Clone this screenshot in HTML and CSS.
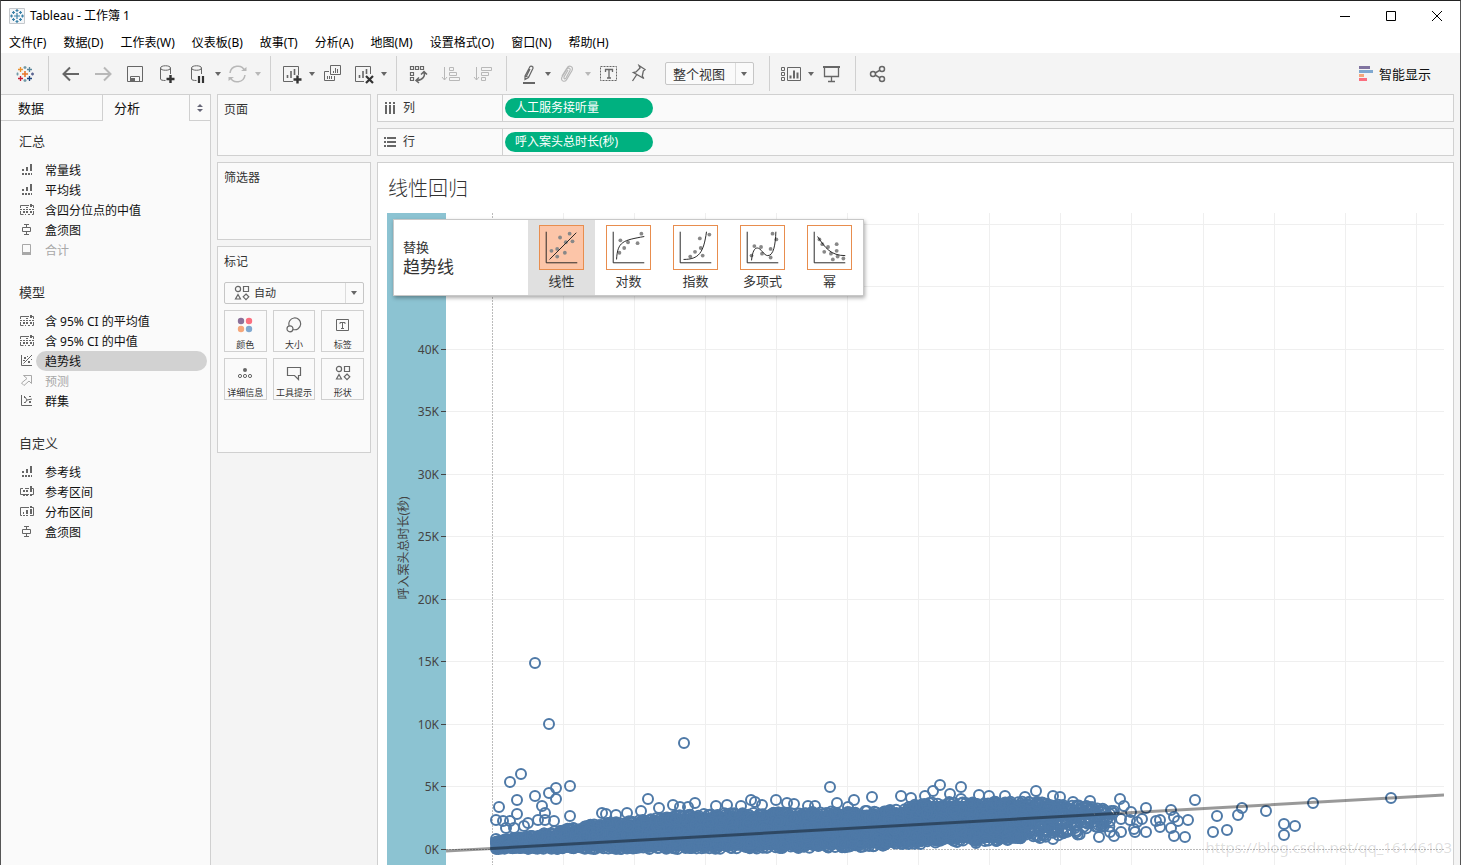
FILE: index.html
```html
<!DOCTYPE html>
<html lang="zh-CN">
<head>
  <meta charset="UTF-8">
  <meta name="viewport" content="width=device-width, initial-scale=1.0">
  <title>Tableau - 工作簿 1</title>
  <link rel="stylesheet" href="styles.css">
</head>
<body>
  <svg class="sprite" aria-hidden="true">
    <symbol id="i-caret" viewBox="0 0 6 4"><path d="M0 0h6L3 4z" fill="currentColor"/></symbol>
    <symbol id="i-line" viewBox="0 0 14 14"><path d="M2 6h2v2H2zM6 4h2v4H6zM10 1h2v7h-2zM2 10h2v2H2zM5 10h2v2H5zM8 10h2v2H8zM11 10h1v2h-1z" fill="currentColor"/></symbol>
    <symbol id="i-band" viewBox="0 0 14 14"><path d="M9 2.500H.5V5M13.500 5V2.500H12M.5 8v3.500h3M5 11.500h1M8 11.500h2M12 11.500h1.500V8" fill="none" stroke="currentColor"/><path d="M0 6.500h14" stroke="currentColor" stroke-dasharray="2 1"/><path d="M3 8h2v2H3zM6 8h2v2H6zM10 8h2v2h-2zM6 4h2v1H6zM10 1h2v3h-2z" fill="currentColor"/></symbol>
    <symbol id="i-range" viewBox="0 0 14 14"><path d="M3 3.500H.5v6H3M11 3.500h2.500v6H11M5 3.500h4M5 9.500h4" fill="none" stroke="currentColor"/><path d="M3 5h2v2H3zM6 5h2v2H6zM10 1h2v6h-2zM3 9h2v2H3zM6 9h2v2H6zM10 9h2v2h-2z" fill="currentColor"/></symbol>
    <symbol id="i-dist" viewBox="0 0 14 14"><path d="M9 2.500H.5v8H2M12 10.500h1.500v-8H12" fill="none" stroke="currentColor"/><path d="M3 7h1v2H3zM6 5h2v4H6zM10 4h2v5h-2zM10 1h2v2h-2zM3 10h2v1H3zM6 10h2v1H6zM10 10h2v1h-2z" fill="currentColor"/></symbol>
    <symbol id="i-box" viewBox="0 0 14 14"><path d="M4 1.500h5M6.500 2v2M2.500 4.500h8v4h-8zM6.500 9v2M4 11.500h5" fill="none" stroke="currentColor"/></symbol>
    <symbol id="i-total" viewBox="0 0 14 14"><path d="M2.500 1.500h8v10h-8z" fill="none" stroke="currentColor"/><path d="M2 9h9v3H2z" fill="currentColor"/></symbol>
    <symbol id="i-trend" viewBox="0 0 14 14"><path d="M1.500 1v10.500H12M3.500 9.500L12 1" fill="none" stroke="currentColor"/><path d="M4 3h2v2H4zM7 2h1v1H7zM3 6h2v1H3zM8 7h2v2H8zM11 5h1v1h-1z" fill="currentColor"/></symbol>
    <symbol id="i-cluster" viewBox="0 0 14 14"><path d="M1.500 1v10.500H12M5 3l2 3-2 3M7 6l5-1" fill="none" stroke="currentColor"/><path d="M4 2h1v2H4zM9 2h2v1H9zM9 7h2v2H9zM4 8h1v1H4z" fill="currentColor"/></symbol>
    <symbol id="i-forecast" viewBox="0 0 14 14"><path d="M3.500 1.500h8v8L9 7l-5 4.500L1.500 9 7 4.500z" fill="none" stroke="currentColor"/></symbol>
    <symbol id="i-shapes" viewBox="0 0 16 16"><g fill="none" stroke="currentColor" stroke-width="1.200"><circle cx="4" cy="4" r="2.600"/><path d="M9.500 1.500h5v5h-5zM4 9.500L6.500 14h-5zM12 9l2.800 2.800L12 14.600l-2.800-2.800z"/></g></symbol>
  </svg>

  <div class="window">
    <header class="titlebar">
      <svg class="app-icon" viewBox="0 0 16 16"><path d="M.5.500h15v15H.5z" fill="#f4f6f8" stroke="#c4c8cc"/><g stroke="#3b82a8" stroke-width="1.200"><path d="M8 5v6M5 8h6M8 1v3M6.500 2.500h3M8 12v3M6.500 13.500h3M1 8h3M2.500 6.500v3M12 8h3M13.500 6.500v3M4.500 3v3M3 4.500h3M11.500 3v3M10 4.500h3M4.500 10v3M3 11.500h3M11.500 10v3M10 11.500h3"/></g></svg>
      <h1>Tableau - 工作簿 1</h1>
      <div class="window-controls">
        <button aria-label="最小化"><svg viewBox="0 0 10 10"><path d="M0 5.500h10"/></svg></button>
        <button aria-label="最大化"><svg viewBox="0 0 10 10"><path d="M.5.500h9v9h-9z"/></svg></button>
        <button aria-label="关闭"><svg viewBox="0 0 10 10"><path d="M0 0l10 10M10 0L0 10"/></svg></button>
      </div>
    </header>

    <nav class="menubar">
      <a href="#">文件(F)</a>
      <a href="#">数据(D)</a>
      <a href="#">工作表(W)</a>
      <a href="#">仪表板(B)</a>
      <a href="#">故事(T)</a>
      <a href="#">分析(A)</a>
      <a href="#">地图(M)</a>
      <a href="#">设置格式(O)</a>
      <a href="#">窗口(N)</a>
      <a href="#">帮助(H)</a>
    </nav>

    <div class="toolbar">
      <div class="tool-group">
        <button class="tool" aria-label="开始页面"><svg viewBox="0 0 20 20" stroke-width="1.300"><path d="M10 7v6M7 10h6" stroke="#e8762b" stroke-width="1.600"/><path d="M5.500 3v5M3 5.500h5" stroke="#eb912c"/><path d="M14.500 3v5M12 5.500h5" stroke="#59879b"/><path d="M5.500 12v5M3 14.500h5" stroke="#c72035"/><path d="M14.500 12v5M12 14.500h5" stroke="#1f457e"/><path d="M10 2v3M8.500 3.500h3M10 15v3M8.500 16.500h3" stroke="#7099a6"/><path d="M3.500 10h-2M2.500 8.500v3" stroke="#7099a6"/><path d="M16 10h3M17.500 8.500v3" stroke="#5b6591"/></svg></button>
      </div>
      <div class="tool-group">
        <button class="tool" aria-label="撤消"><svg viewBox="0 0 20 20" stroke-width="2"><path d="M3 10h15M9 3.500L2.500 10 9 16.500"/></svg></button>
        <button class="tool off" aria-label="重做"><svg viewBox="0 0 20 20" stroke-width="2"><path d="M2 10h15M11 3.500l6.500 6.500-6.500 6.500"/></svg></button>
        <button class="tool" aria-label="保存"><svg viewBox="0 0 20 20"><path d="M2.500 2.500h15v15h-15zM5.500 17v-4.500h9V17"/><path d="M6 14h4v3H6z" fill="currentColor" stroke="none"/></svg></button>
        <button class="tool" aria-label="新建数据源"><svg viewBox="0 0 20 20"><path d="M3.500 4v11c0 1 2 1.500 5 1.500M13.500 4v6M3.500 4C3.500 1 13.500 1 13.500 4S3.500 7 3.500 4"/><path class="dark" d="M13.500 11v8M9.500 15h8" stroke-width="2.400"/></svg></button>
        <button class="tool narrow" aria-label="暂停自动更新"><svg viewBox="0 0 20 20"><path d="M3.500 4v11c0 1 2 1.500 5 1.500M13.500 4v6M3.500 4C3.500 1 13.500 1 13.500 4S3.500 7 3.500 4"/><path class="dark" d="M11 12v7M15 12v7" stroke-width="2.200"/></svg></button>
        <button class="caret" aria-label="更新选项"><svg><use href="#i-caret"/></svg></button>
        <button class="tool narrow off" aria-label="运行更新"><svg viewBox="0 0 20 20" stroke-width="1.500"><path d="M2 9c1-8 12-9 14.500-2.500M17 11c-1 8-12 9-14.500 2.500"/><path d="M13 7h5.500V3zM6 13H.5v4z" fill="currentColor" stroke="none"/></svg></button>
        <button class="caret off" aria-label="运行选项"><svg><use href="#i-caret"/></svg></button>
      </div>
      <div class="tool-group">
        <button class="tool narrow" aria-label="新建工作表"><svg viewBox="0 0 20 20"><path d="M11 17.500H1.500v-15h15V11"/><path d="M5.500 14v-3M9 14V7M12.500 11V5" stroke-width="1.600"/><path class="dark" d="M15.500 11.500v8M11.500 15.500h8" stroke-width="2.400"/></svg></button>
        <button class="caret" aria-label="新建选项"><svg><use href="#i-caret"/></svg></button>
        <button class="tool" aria-label="复制工作表"><svg viewBox="0 0 20 20"><path d="M7.500 1.500h10v9h-10zM6 7.500H1.500v9h10V12"/><path d="M10.500 9V7M12.500 9V4M14.500 9V5M4.500 15v-3M6.500 15v-3M8.500 15v-3"/></svg></button>
        <button class="tool narrow" aria-label="清除工作表"><svg viewBox="0 0 20 20"><path d="M10 17.500H1.500v-15h15V10"/><path d="M5.500 14v-3M9 14V7M12.500 10V5" stroke-width="1.600"/><path class="dark" d="M12 12l7 7M19 12l-7 7" stroke-width="2.200"/></svg></button>
        <button class="caret" aria-label="清除选项"><svg><use href="#i-caret"/></svg></button>
      </div>
      <div class="tool-group">
        <button class="tool" aria-label="交换行和列"><svg viewBox="0 0 20 20" stroke-width="1.200"><path d="M1.500 2.500h3v3h-3zM6.500 2.500h3v3h-3zM11.500 2.500h3v3h-3zM1.500 8.500h3v3h-3zM1.500 13.500h3v3h-3z"/><path d="M15 8c1.500 4-1 8-7 8.500M12 10.500l3-3 3 3M10 13.500l-3 3 3 2.500" stroke-width="1.500"/></svg></button>
        <button class="tool off" aria-label="升序"><svg viewBox="0 0 20 20"><path d="M3.500 3v13M1 13l2.500 3L6 13M8.500 3.500h4v3h-4zM8.500 8.500h7v3h-7zM8.500 13.500h10v3h-10z"/></svg></button>
        <button class="tool off" aria-label="降序"><svg viewBox="0 0 20 20"><path d="M3.500 3v13M1 13l2.500 3L6 13M8.500 3.500h10v3h-10zM8.500 8.500h7v3h-7zM8.500 13.500h4v3h-4z"/></svg></button>
      </div>
      <div class="tool-group">
        <button class="tool narrow" aria-label="突出显示"><svg viewBox="0 0 20 20"><path d="M7 12l5-9.500c1-1 3.500 0 3 1.700L10.500 13.500 7 15.500zM7 12l3.500 1.500M12 5l-3.500 7" stroke-width="1.200"/><path d="M5 19h12" stroke-width="2"/></svg></button>
        <button class="caret" aria-label="突出选项"><svg><use href="#i-caret"/></svg></button>
        <button class="tool narrow off" aria-label="分组成员"><svg viewBox="0 0 20 20"><path d="M4 12l5-8c2-3.500 7-1.500 5 2.500L9 15c-2 4-7 2-5-2l5-8c1.500-2 4-.5 3 1.500L8 14c-1 1.500-2.500.5-2-1l4-7" stroke-width="1.200"/></svg></button>
        <button class="caret off" aria-label="分组选项"><svg><use href="#i-caret"/></svg></button>
        <button class="tool" aria-label="显示标记标签"><svg viewBox="0 0 20 20"><path d="M1.500 2.500h16v14h-16z" stroke-dasharray="2 1"/><path d="M6.500 8V5.500h7V8M10 6v8M8 14h4" stroke-width="1.300"/></svg></button>
        <button class="tool narrow" aria-label="固定轴"><svg viewBox="0 0 20 20"><path d="M9 1.500l6 4-1.700 1.500-1 5 1.500 2.500L3.500 8.500l2.500-.5 4-4zM6.500 11l-4 6" stroke-width="1.300"/></svg></button>
        <label class="select fit">
          <select aria-label="适合"><option>整个视图</option><option>标准</option></select>
          <svg><use href="#i-caret"/></svg>
        </label>
      </div>
      <div class="tool-group">
        <button class="tool narrow wide-icon" aria-label="显示/隐藏功能区"><svg viewBox="0 0 22 20"><path d="M1.500 3.500h3v3h-3zM1.500 8.500h3v3h-3zM1.500 13.500h3v3h-3zM7.500 3.500h13v13h-13z"/><path d="M10.500 14.500v-3M14 14.500v-8M17.500 14.500v-6" stroke-width="2"/></svg></button>
        <button class="caret" aria-label="功能区选项"><svg><use href="#i-caret"/></svg></button>
        <button class="tool" aria-label="演示模式"><svg viewBox="0 0 20 20"><path d="M1 3h17" stroke-width="2"/><path d="M2.500 4v8.500h14V4M9.500 13v4M6 17.500h7" stroke-width="1.300"/></svg></button>
      </div>
      <div class="tool-group last">
        <button class="tool" aria-label="共享"><svg viewBox="0 0 20 20" stroke-width="1.500"><circle cx="5" cy="10" r="2.500"/><circle cx="14" cy="5" r="2.500"/><circle cx="14" cy="15" r="2.500"/><path d="M7.200 9L12 6.200M7.200 11L12 13.800"/></svg></button>
      </div>
      <button class="show-me">
        <svg viewBox="0 0 15 15"><path fill="#8074a0" d="M0 0h11v3H0z"/><path fill="#7fa8d0" d="M0 4h14v3H0z"/><path fill="#f5a77b" d="M0 8h5v3H0z"/><path fill="#fb6f7f" d="M0 12h8v3H0z"/></svg>
        智能显示
      </button>
    </div>

    <main class="workspace">
      <aside class="sidebar">
        <div class="tabs">
          <button class="tab">数据</button>
          <button class="tab active">分析</button>
          <button class="tab-toggle" aria-label="折叠"><svg viewBox="0 0 6 8"><path d="M0 3h6L3 0zM0 5h6L3 8z" fill="#667"/></svg></button>
        </div>
        <div class="analytics">
          <section>
            <h2>汇总</h2>
            <button class="item"><svg><use href="#i-line"/></svg><span>常量线</span></button>
            <button class="item"><svg><use href="#i-line"/></svg><span>平均线</span></button>
            <button class="item"><svg><use href="#i-band"/></svg><span>含四分位点的中值</span></button>
            <button class="item"><svg><use href="#i-box"/></svg><span>盒须图</span></button>
            <button class="item off" disabled><svg><use href="#i-total"/></svg><span>合计</span></button>
          </section>
          <section>
            <h2>模型</h2>
            <button class="item"><svg><use href="#i-band"/></svg><span>含 95% CI 的平均值</span></button>
            <button class="item"><svg><use href="#i-band"/></svg><span>含 95% CI 的中值</span></button>
            <button class="item selected"><svg><use href="#i-trend"/></svg><span>趋势线</span></button>
            <button class="item off" disabled><svg><use href="#i-forecast"/></svg><span>预测</span></button>
            <button class="item"><svg><use href="#i-cluster"/></svg><span>群集</span></button>
          </section>
          <section>
            <h2>自定义</h2>
            <button class="item"><svg><use href="#i-line"/></svg><span>参考线</span></button>
            <button class="item"><svg><use href="#i-range"/></svg><span>参考区间</span></button>
            <button class="item"><svg><use href="#i-dist"/></svg><span>分布区间</span></button>
            <button class="item"><svg><use href="#i-box"/></svg><span>盒须图</span></button>
          </section>
        </div>
      </aside>

      <div class="cards">
        <section class="card pages"><h2>页面</h2></section>
        <section class="card filters"><h2>筛选器</h2></section>
        <section class="card marks">
          <h2>标记</h2>
          <label class="select mark-type">
            <svg class="mark-icon"><use href="#i-shapes"/></svg>
            <select aria-label="标记类型"><option>自动</option><option>圆</option></select>
            <svg><use href="#i-caret"/></svg>
          </label>
          <div class="mark-grid">
            <button><svg viewBox="0 0 16 16"><circle cx="4" cy="4" r="3.200" fill="#8b7099"/><circle cx="12" cy="4" r="3.200" fill="#fb6f7f"/><circle cx="4" cy="12" r="3.200" fill="#f5a77b"/><circle cx="12" cy="12" r="3.200" fill="#7fa8d0"/></svg>颜色</button>
            <button><svg viewBox="0 0 16 16" fill="none" stroke="currentColor" stroke-width="1.200"><path d="M3.200 8.800a5.900 5.900 0 1 1 3.900 3.700"/><circle cx="4" cy="11.800" r="3"/></svg>大小</button>
            <button><svg viewBox="0 0 16 16" fill="none" stroke="currentColor"><path d="M1.500 2.500h12v11h-12z"/><path d="M5 7V5.500h5V7M7.500 6v5M6 11.500h3"/></svg>标签</button>
            <button><svg viewBox="0 0 16 16" fill="none" stroke="currentColor"><circle cx="8" cy="5" r="2" fill="currentColor" stroke="none"/><circle cx="3" cy="11" r="1.600"/><circle cx="8" cy="11" r="1.600"/><circle cx="13" cy="11" r="1.600"/></svg>详细信息</button>
            <button><svg viewBox="0 0 16 16" fill="none" stroke="currentColor" stroke-width="1.200"><path d="M1.500 2.500h13v8h-2v4l-4-4h-7z"/></svg>工具提示</button>
            <button><svg><use href="#i-shapes"/></svg>形状</button>
          </div>
        </section>
      </div>

      <div class="sheet">
        <div class="shelf">
          <div class="shelf-name"><svg viewBox="0 0 12 14"><path d="M1 1h2v2H1zM5 1h2v2H5zM9 1h2v2H9zM1 4h2v9H1zM5 4h2v9H5zM9 4h2v9H9z" fill="#666"/></svg>列</div>
          <button class="pill">人工服务接听量</button>
        </div>
        <div class="shelf">
          <div class="shelf-name"><svg viewBox="0 0 12 14"><path d="M0 2h2v2H0zM0 6h2v2H0zM0 10h2v2H0zM3 2h9v2H3zM3 6h9v2H3zM3 10h9v2H3z" fill="#666"/></svg>行</div>
          <button class="pill">呼入案头总时长(秒)</button>
        </div>
        <section class="view">
          <h2>线性回归</h2>
          <div class="chart">
            <svg id="plot" role="img" aria-label="线性回归散点图"></svg>
            <div class="drop-panel">
              <div class="drop-title"><small>替换</small><strong>趋势线</strong></div>
              <button class="model active"><svg viewBox="0 0 45 45"><g class="dots"><circle cx="21" cy="12" r="2"/><circle cx="31" cy="8" r="2"/><circle cx="34" cy="16" r="2"/><circle cx="27" cy="17" r="2"/><circle cx="12" cy="26" r="2"/><circle cx="18" cy="24" r="2"/><circle cx="26" cy="28" r="2"/><circle cx="18" cy="32" r="2"/></g><path d="M6.500 6v32.500H39M10 35L38 7"/></svg>线性</button>
              <button class="model"><svg viewBox="0 0 45 45"><g class="dots"><circle cx="14" cy="15" r="2"/><circle cx="36" cy="8" r="2"/><circle cx="22" cy="17" r="2"/><circle cx="32" cy="18" r="2"/><circle cx="18" cy="23" r="2"/><circle cx="13" cy="28" r="2"/></g><path d="M6.500 6v32.500H39M10 35C11 16 17 15 39 11"/></svg>对数</button>
              <button class="model"><svg viewBox="0 0 45 45"><g class="dots"><circle cx="37" cy="9" r="2"/><circle cx="27" cy="13" r="2"/><circle cx="28" cy="23" r="2"/><circle cx="22" cy="27" r="2"/><circle cx="17" cy="32" r="2"/><circle cx="30" cy="31" r="2"/></g><path d="M6.500 6v32.500H39M10 35C26 35 31 28 34 6"/></svg>指数</button>
              <button class="model"><svg viewBox="0 0 45 45"><g class="dots"><circle cx="33" cy="8" r="2"/><circle cx="37" cy="14" r="2"/><circle cx="14" cy="21" r="2"/><circle cx="21" cy="22" r="2"/><circle cx="31" cy="24" r="2"/><circle cx="22" cy="29" r="2"/><circle cx="11" cy="31" r="2"/><circle cx="31" cy="33" r="2"/></g><path d="M6.500 6v32.500H39M11 36C12 27 14 23 17 23C21 23 24 31 28 31C34 31 36 20 36.500 6"/></svg>多项式</button>
              <button class="model"><svg viewBox="0 0 45 45"><g class="dots"><circle cx="12" cy="14" r="2"/><circle cx="15" cy="19" r="2"/><circle cx="21" cy="22" r="2"/><circle cx="17" cy="27" r="2"/><circle cx="24" cy="29" r="2"/><circle cx="30" cy="19" r="2"/><circle cx="30" cy="26" r="2"/><circle cx="31" cy="32" r="2"/><circle cx="26" cy="35" r="2"/><circle cx="37" cy="34" r="2"/></g><path d="M6.500 6v32.500H39M10 11C18 23 24 31 39 31"/></svg>幂</button>
            </div>
            <span class="watermark">https://blog.csdn.net/qq_16146103</span>
          </div>
        </section>
      </div>
    </main>
  </div>
  <script src="chart.js"></script>
</body>
</html>
```

FILE: styles.css
```css
:root {
  --line: #d0d0d0;
  --bar: #f4f4f4;
  --card: #fafafa;
  --text: #333;
  --icon: #666;
  --green: #00b180;
  --axis: #8cc3d2;
}
* {
  box-sizing: border-box;
}
body {
  margin: 0;
  font-family: "Noto Sans", "Noto Sans CJK SC", sans-serif;
  font-size: 12px;
  line-height: 20px;
  color: var(--text);
}
h1, h2 {
  margin: 0;
  font-weight: normal;
}
button, select {
  font: inherit;
  color: inherit;
  background: none;
  border: none;
  padding: 0;
}
svg {
  display: block;
  flex: none;
}
.sprite {
  display: none;
}
.window {
  display: flex;
  flex-direction: column;
  height: 100vh;
  overflow: hidden;
  background: var(--bar);
  border: 1px solid #555;
  border-top-color: #222;
  border-bottom: none;
}

/* title and menu */
.titlebar {
  display: flex;
  align-items: center;
  height: 30px;
  padding-left: 8px;
  background: #fff;
  color: #000;
}
.app-icon {
  width: 16px;
  height: 16px;
  margin-right: 5px;
}
.titlebar h1 {
  font-size: 12px;
}
.window-controls {
  display: flex;
  margin-left: auto;
}
.window-controls button {
  display: grid;
  place-items: center;
  width: 46px;
  height: 30px;
}
.window-controls svg {
  width: 10px;
  height: 10px;
  fill: none;
  stroke: #000;
}
.menubar {
  display: flex;
  gap: 17px;
  height: 22px;
  padding: 2px 0 0 8px;
  background: #fff;
}
.menubar a {
  color: #000;
  text-decoration: none;
}

/* toolbar */
.toolbar {
  display: flex;
  align-items: center;
  height: 41px;
  padding: 0 29px 0 2px;
}
.tool-group {
  display: flex;
  align-items: center;
  height: 35px;
  padding: 0 7px 0 6px;
  border-right: 1px solid var(--line);
}
.tool-group.last {
  border-right: none;
}
.tool, .caret {
  display: grid;
  place-items: center;
  width: 32px;
  height: 28px;
  color: var(--icon);
}
.tool.narrow {
  width: 30px;
}
.tool svg {
  width: 20px;
  height: 20px;
  fill: none;
  stroke: currentColor;
}
.tool.wide-icon svg {
  width: 22px;
}
.tool .dark {
  stroke: #333;
}
.caret {
  width: 10px;
}
.caret svg, .select svg:last-child {
  width: 6px;
  height: 4px;
}
.tool.off, .caret.off {
  color: #b8b8b8;
}
.select {
  display: flex;
  align-items: center;
  position: relative;
  border: 1px solid #c6c6c6;
  border-radius: 2px;
  background: var(--card);
}
.select select {
  flex: 1;
  height: 100%;
  appearance: none;
}
.select svg:last-child {
  position: absolute;
  right: 6px;
  color: var(--icon);
}
.select::after {
  content: "";
  position: absolute;
  top: 0;
  bottom: 0;
  right: 17px;
  width: 1px;
  background: #dcdcdc;
}
.fit {
  width: 89px;
  height: 23px;
  margin: 0 8px 0 10px;
}
.fit select {
  padding-left: 7px;
  font-size: 13px;
}
.show-me {
  display: flex;
  align-items: center;
  gap: 5px;
  margin-left: auto;
  font-size: 13px;
  color: #111;
}
.show-me svg {
  width: 15px;
  height: 15px;
}

/* analytics pane */
.workspace {
  display: flex;
  flex: 1;
  min-height: 0;
}
.sidebar {
  width: 210px;
  flex: none;
  background: var(--card);
  border-right: 1px solid var(--line);
}
.tabs {
  display: flex;
  height: 27px;
  border-top: 1px solid var(--line);
}
.tab {
  width: 102px;
  padding-left: 17px;
  text-align: left;
  font-size: 13px;
  color: #111;
  border-right: 1px solid var(--line);
  border-bottom: 1px solid var(--line);
}
.tab.active {
  flex: 1;
  padding-left: 11px;
  border-bottom: none;
}
.tab-toggle {
  display: grid;
  place-items: center;
  width: 20px;
  border-bottom: 1px solid var(--line);
}
.tab-toggle svg {
  width: 6px;
  height: 8px;
}
.analytics {
  display: flex;
  flex-direction: column;
  gap: 22px;
  padding: 10px 3px 0 18px;
}
.analytics h2 {
  margin-bottom: 9px;
  font-size: 13px;
}
.item {
  display: flex;
  align-items: center;
  gap: 2px;
  width: 100%;
  height: 20px;
  text-align: left;
  color: #111;
}
.item svg {
  width: 14px;
  height: 14px;
  margin-left: 1px;
  color: var(--icon);
}
.item span {
  flex: 1;
  height: 20px;
  padding-left: 9px;
  border-radius: 10px;
  line-height: 22px;
}
.item.selected span {
  background: #d2d2d2;
}
.item.off, .item.off svg {
  color: #a8a8a8;
}

/* cards */
.cards {
  display: flex;
  flex-direction: column;
  gap: 6px;
  width: 154px;
  flex: none;
  margin: 0 6px;
}
.card {
  padding: 5px 6px;
  background: var(--card);
  border: 1px solid var(--line);
}
.card h2 {
  font-size: 12px;
}
.pages {
  height: 62px;
}
.filters {
  height: 78px;
}
.marks {
  height: 207px;
}
.mark-type {
  height: 22px;
  margin: 10px 0 6px;
}
.mark-icon {
  width: 16px;
  height: 16px;
  margin-left: 9px;
  color: var(--icon);
}
.mark-type select {
  padding-left: 4px;
  font-size: 11px;
}
.mark-grid {
  display: grid;
  grid-template-columns: repeat(3, 1fr);
  gap: 6px;
}
.mark-grid button {
  display: flex;
  flex-direction: column;
  align-items: center;
  gap: 5px;
  height: 42px;
  padding-top: 6px;
  border: 1px solid var(--line);
  font-size: 9px;
  line-height: 14px;
  white-space: nowrap;
}
.mark-grid svg {
  width: 16px;
  height: 16px;
  color: var(--icon);
}

/* shelves and view */
.sheet {
  display: flex;
  flex-direction: column;
  flex: 1;
  gap: 6px;
  min-width: 0;
  padding-right: 6px;
}
.shelf {
  display: flex;
  align-items: center;
  height: 28px;
  flex: none;
  background: var(--card);
  border: 1px solid var(--line);
}
.shelf-name {
  display: flex;
  align-items: center;
  gap: 7px;
  width: 125px;
  height: 100%;
  padding-left: 6px;
  border-right: 1px solid var(--line);
}
.shelf-name svg {
  width: 12px;
  height: 14px;
}
.pill {
  width: 148px;
  height: 20px;
  margin-left: 2px;
  padding-left: 10px;
  border-radius: 10px;
  background: var(--green);
  color: #fff;
  text-align: left;
}
.view {
  display: flex;
  flex-direction: column;
  flex: 1;
  min-height: 0;
  padding: 11px 9px 0;
  background: #fff;
  border: 1px solid var(--line);
  border-bottom: none;
}
.view h2 {
  margin-bottom: 9px;
  padding-left: 1px;
  font-size: 20px;
  font-weight: 300;
  line-height: 30px;
}
.chart {
  position: relative;
  flex: 1;
  min-height: 0;
}
#plot {
  width: 100%;
  height: 100%;
}
.axis {
  fill: var(--axis);
}
.grid {
  stroke: #efefef;
}
.zero {
  stroke: #bbb;
  stroke-dasharray: 2 1;
}
.tick {
  stroke: #444;
}
.axis-label {
  fill: #444;
  font-size: 12px;
  text-anchor: end;
}
.axis-title {
  fill: #444;
  font-size: 12px;
  text-anchor: middle;
}
.mark {
  fill: none;
  stroke: #4e79a7;
  stroke-width: 2;
}
.mass {
  fill: #4e79a7;
}
.trend {
  stroke: #000;
  stroke-opacity: 0.4;
  stroke-width: 3;
}

/* trend line drop targets */
.drop-panel {
  position: absolute;
  top: 6px;
  left: 6px;
  display: flex;
  height: 77px;
  background: #fff;
  border: 1px solid #c8c8c8;
  box-shadow: 1px 2px 4px #0005;
}
.drop-title {
  display: flex;
  flex-direction: column;
  justify-content: center;
  width: 134px;
  padding: 0 0 2px 9px;
}
.drop-title small {
  font-size: 13px;
}
.drop-title strong {
  font-size: 17px;
  font-weight: normal;
}
.model {
  display: flex;
  flex-direction: column;
  align-items: center;
  gap: 1px;
  width: 67px;
  padding-top: 5px;
  font-size: 13px;
}
.model svg {
  width: 45px;
  height: 45px;
  border: 1px solid #e88d4e;
  fill: none;
  stroke: #222;
}
.model .dots {
  fill: #888;
  stroke: none;
}
.model.active {
  background: #e0e0e0;
}
.model.active svg {
  background: #fcc5a8;
}
.watermark {
  position: absolute;
  right: -8px;
  bottom: 8px;
  font-size: 15px;
  color: #00000024;
}
```

FILE: chart.js
```js
const svg = document.getElementById('plot');
const NS = 'http://www.w3.org/2000/svg';

const AXIS_W = 59;     // width of the value axis
const BASE_W = 998;    // plot width that the point positions refer to
const ZERO_X = 46;
const ZERO_Y = 636;
const STEP_X = 71.05;
const STEP_Y = 62.5;   // 5K

// [x, height above zero] of the marks outside the dense area
const outliers = [
  [43,186],[57,125],[29,75],[18,67],[25,49],[43,53],[57,56],[64,61],[64,50],[78,63],[7,42],[50,43],[53,36],
  [4,29],[11,28],[18,28],[25,35],[14,21],[22,21],[46,29],[53,29],[36,26],[32,23],[62,28],[4,10],[192,106],
  [78,33],[156,50],[110,36],[114,35],[124,34],[135,36],[149,38],[167,41],[181,44],[188,42],[196,42],[203,46],
  [224,43],[235,44],[249,43],[259,49],[263,47],[270,44],[284,49],[295,46],[302,45],[316,43],[323,43],[338,62],
  [345,46],[362,49],[380,52],[356,42],[409,53],[419,51],[433,53],[441,58],[448,64],[469,62],[458,55],[469,50],
  [487,54],[497,53],[513,53],[533,52],[544,58],[561,53],[568,52],[581,47],[598,48],[628,50],[632,43],[639,37],
  [654,41],[679,39],[703,49],[664,28],[668,29],[668,22],[650,30],[645,27],[642,20],[654,17],[643,17],[629,17],
  [629,30],[638,29],[618,28],[607,12],[622,13],[618,17],[682,32],[686,28],[696,29],[679,21],[682,13],[693,12],
  [561,10],[548,11],[526,11],[493,8],[484,6],[465,7],[412,7],[725,33],[721,17],[735,19],[746,34],[750,41],
  [774,38],[821,46],[792,25],[792,14],[803,23],[899,51]
];

// [x, top, bottom] outline of the dense area, heights above zero
const envelope = [
  [4,8,0],[30,12,0],[55,16,0],[70,20,0],[103,25,0],[148,29,0],[188,34,0],[228,36,0],[308,37,1],[368,38,2],
  [408,40,4],[430,47,5],[470,47,8],[515,48,8],[533,48,10],[560,46,13],[590,44,14],[622,40,20]
];

function limits(x) {
  let i = 1;
  while (i < envelope.length - 1 && envelope[i][0] < x) i++;
  const a = envelope[i - 1], b = envelope[i];
  const t = (x - a[0]) / (b[0] - a[0]);
  return [a[1] + (b[1] - a[1]) * t, a[2] + (b[2] - a[2]) * t];
}

let seed = 7;
function random() {
  seed = (seed * 16807) % 2147483647;
  return seed / 2147483647;
}

const cloud = [];
for (let i = 0; i < 2600; i++) {
  const x = 4 + random() * 618;
  if (x > 530 && random() < (x - 530) / 130) continue;
  const [top, bottom] = limits(x);
  cloud.push([x, bottom + random() * (top - bottom)]);
}

function add(tag, attrs, text) {
  const el = document.createElementNS(NS, tag);
  for (const key in attrs) el.setAttribute(key, attrs[key]);
  if (text) el.textContent = text;
  svg.appendChild(el);
}

function draw() {
  svg.textContent = '';
  const width = svg.clientWidth;
  const height = svg.clientHeight;
  const k = (width - AXIS_W) / BASE_W;
  const px = x => AXIS_W + (ZERO_X + x) * k;
  const py = y => ZERO_Y - y;

  for (let i = 1; px(i * STEP_X) < width; i++) {
    const x = Math.round(px(i * STEP_X)) + 0.5;
    add('line', { class: 'grid', x1: x, x2: x, y1: 0, y2: height });
  }
  add('rect', { class: 'axis', width: AXIS_W, height: height });
  for (let i = 0; i <= 10; i++) {
    const y = Math.floor(py(i * STEP_Y)) + 0.5;
    add('line', { class: i ? 'grid' : 'zero', x1: AXIS_W, x2: width, y1: y, y2: y });
    add('line', { class: 'tick', x1: AXIS_W - 5, x2: AXIS_W, y1: y, y2: y });
    add('text', { class: 'axis-label', x: AXIS_W - 7, y: y + 4 }, i * 5 + 'K');
  }
  const zero = Math.round(px(0)) + 0.5;
  add('line', { class: 'zero', x1: zero, x2: zero, y1: 0, y2: height });
  add('text', { class: 'axis-title', transform: 'translate(21 335) rotate(-90)' }, '呼入案头总时长(秒)');

  const core = envelope.filter(e => e[0] < 540);
  const up = core.map(e => px(e[0]) + ' ' + py(e[1] + 1));
  const down = core.map(e => px(e[0]) + ' ' + py(e[2] - 2)).reverse();
  add('path', { class: 'mass', d: 'M' + up.concat(down).join('L') + 'Z' });
  for (const [x, y] of cloud.concat(outliers)) {
    add('circle', { class: 'mark', cx: px(x), cy: py(y), r: 5 });
  }
  add('line', { class: 'trend', x1: AXIS_W, y1: 638, x2: width, y2: 582 });
}

draw();
window.addEventListener('resize', draw);
```
